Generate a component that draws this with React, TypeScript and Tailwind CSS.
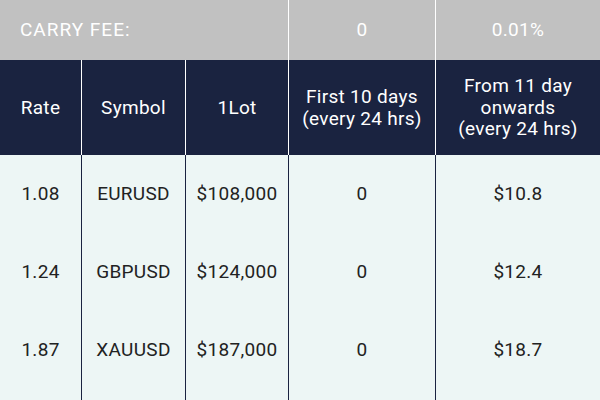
const rows = [
  { rate: "1.08", symbol: "EURUSD", lot: "$108,000", first: "0", after: "$10.8" },
  { rate: "1.24", symbol: "GBPUSD", lot: "$124,000", first: "0", after: "$12.4" },
  { rate: "1.87", symbol: "XAUUSD", lot: "$187,000", first: "0", after: "$18.7" },
]

export default function App() {
  return (
    <div className="w-[600px] h-[400px] overflow-hidden bg-[#edf6f5] font-['Roboto',sans-serif] text-[19px] leading-[21.5px] tracking-[0.3px]">
      {/* Carry fee row */}
      <div className="flex h-[60px] bg-[#c1c1c1] text-white">
        <div className="w-[288px] flex items-center pl-5 tracking-[1px]">CARRY FEE:</div>
        <div className="w-[147px] flex items-center justify-center border-l border-white">0</div>
        <div className="flex-1 flex items-center justify-center border-l border-white">0.01%</div>
      </div>

      {/* Header */}
      <div className="flex h-[95px] bg-[#1a2340] text-white text-center">
        <div className="w-[81px] flex items-center justify-center">Rate</div>
        <div className="w-[104px] flex items-center justify-center border-l border-white">Symbol</div>
        <div className="w-[103px] flex items-center justify-center border-l border-white">1Lot</div>
        <div className="w-[147px] flex items-center justify-center border-l border-white">
          First 10 days
          <br />
          (every 24 hrs)
        </div>
        <div className="flex-1 flex items-center justify-center border-l border-white">
          From 11 day
          <br />
          onwards
          <br />
          (every 24 hrs)
        </div>
      </div>

      {/* Body */}
      <div className="flex flex-col text-[#222]">
        {rows.map((r) => (
          <div key={r.symbol} className="flex h-[78px]">
            <div className="w-[81px] flex items-center justify-center">{r.rate}</div>
            <div className="w-[104px] flex items-center justify-center border-l border-[#1a2340]">{r.symbol}</div>
            <div className="w-[103px] flex items-center justify-center border-l border-[#1a2340]">{r.lot}</div>
            <div className="w-[147px] flex items-center justify-center border-l border-[#1a2340]">{r.first}</div>
            <div className="flex-1 flex items-center justify-center border-l border-[#1a2340]">{r.after}</div>
          </div>
        ))}
        <div className="flex h-[20px]">
          <div className="w-[81px]" />
          <div className="w-[104px] border-l border-[#1a2340]" />
          <div className="w-[103px] border-l border-[#1a2340]" />
          <div className="w-[147px] border-l border-[#1a2340]" />
          <div className="flex-1 border-l border-[#1a2340]" />
        </div>
      </div>
    </div>
  )
}
